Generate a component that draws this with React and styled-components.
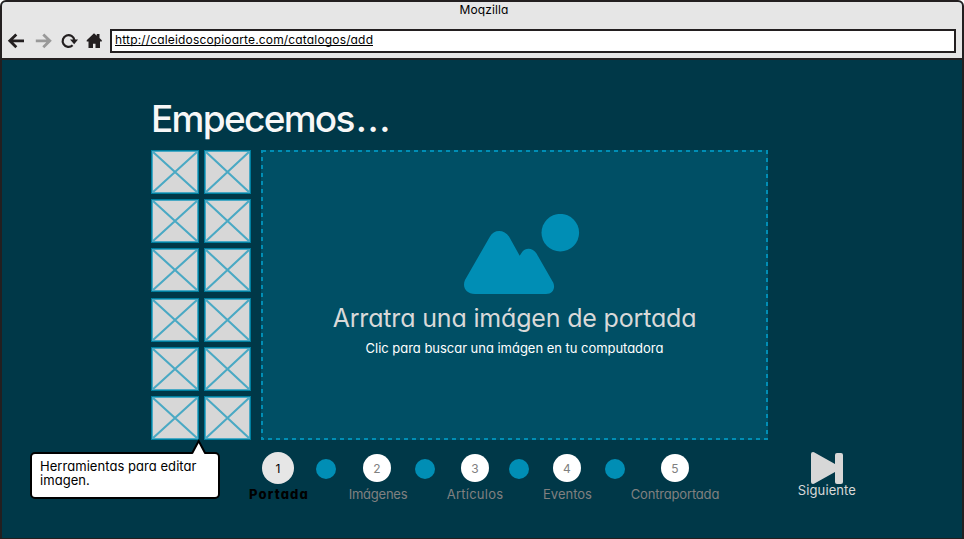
import React from "react";
import styled, { createGlobalStyle } from "styled-components";

const color = {
  ink: "#231f20",
  chrome: "#e6e6e6",
  page: "#003848",
  panel: "#004f65",
  accent: "#008eb5",
  tile: "#d7d7d7",
  tileLine: "#4aa9c4",
  muted: "#808080",
};

const GlobalStyle = createGlobalStyle`
  * { box-sizing: border-box; }
  body {
    margin: 0;
    background: #fff;
    font-family: Inter, "Open Sans", sans-serif;
    font-feature-settings: "cv11";
    overflow: hidden;
  }
  svg { display: block; flex: none; }
`;

const BrowserWindow = styled.div`
  width: 964px;
  height: 539px;
  border: 2px solid ${color.ink};
  border-bottom-width: 1px;
  border-radius: 6px 6px 0 0;
  background: ${color.page};
  overflow: hidden;
`;

const Chrome = styled.header`
  height: 58px;
  background: ${color.chrome};
  border-bottom: 2px solid ${color.ink};
`;

const TitleBar = styled.div`
  height: 27px;
  padding-left: 4px;
  text-align: center;
  font-size: 12px;
  line-height: 16px;
  letter-spacing: 0.1px;
`;

const Toolbar = styled.div`
  display: flex;
  align-items: center;
  height: 24px;
  padding: 0 6px 0 5px;
`;

const NavIcon = styled.svg`
  width: 18px;
  height: 18px;
  margin-right: ${(p) => p.$gap}px;
`;

const AddressBar = styled.div`
  flex: 1;
  height: 24px;
  padding-left: 3px;
  border: 2px solid ${color.ink};
  background: #fff;
  font-size: 12px;
  line-height: 18px;
  letter-spacing: 0.16px;
`;

const Url = styled.span`
  display: inline-block;
  height: 15px;
  border-bottom: 1px solid #000;
`;

const Page = styled.main`
  padding-top: 39px;
`;

const Title = styled.h1`
  margin: 0 0 11px 149px;
  color: #f7f7f7;
  font-size: 37px;
  font-weight: 450;
  line-height: 40px;
  letter-spacing: -1.7px;
`;

const Ellipsis = styled.span`
  margin-left: 2px;
  letter-spacing: 0.6px;
`;

const Workspace = styled.div`
  display: flex;
  gap: 10px;
  height: 290px;
  margin-left: 149px;
`;

const Tools = styled.div`
  display: grid;
  grid-template-columns: 48px 47px;
  grid-auto-rows: 44px;
  column-gap: 5px;
  align-content: space-between;
`;

const ToolTile = styled.svg`
  width: 100%;
  height: 100%;
`;

const DropZone = styled.section`
  position: relative;
  display: flex;
  flex-direction: column;
  align-items: center;
  width: 507px;
  padding-top: 64px;
  background: ${color.panel};
`;

const DashedOutline = styled.svg`
  position: absolute;
  inset: 0;
  width: 100%;
  height: 100%;
`;

const Picture = styled.svg`
  width: 116px;
  height: 80px;
  margin: 0 0 9px 15px;
`;

const DropTitle = styled.div`
  margin-bottom: 6px;
  color: #d9d9d9;
  font-size: 25px;
  font-weight: 400;
  line-height: 30px;
  letter-spacing: -0.17px;
`;

const DropHint = styled.div`
  color: #fff;
  font-size: 13px;
  line-height: 18px;
  letter-spacing: -0.03px;
`;

const Footer = styled.footer`
  display: flex;
  align-items: flex-start;
  margin-top: 12px;
  padding: 0 106px 0 28px;
`;

const Callout = styled.div`
  position: relative;
  width: 190px;
  height: 47px;
  margin-right: 28px;
  padding: 5px 8px;
  border: 2px solid #000;
  border-radius: 5px;
  background: #fff;
  font-size: 13px;
  line-height: 14px;
  letter-spacing: 0.05px;
`;

const CalloutTail = styled.svg`
  position: absolute;
  left: 159px;
  top: -15px;
  width: 16px;
  height: 16px;
`;

const Steps = styled.div`
  display: grid;
  grid-template-columns: 60px 36px 66px 30px 70px 18px 78px 18px 102px;
  justify-items: center;
`;

const Step = styled.div`
  display: flex;
  flex-direction: column;
  align-items: center;
`;

const StepNumber = styled.div`
  display: grid;
  place-items: center;
  width: ${(p) => (p.$active ? 32 : 28)}px;
  height: ${(p) => (p.$active ? 32 : 28)}px;
  margin: ${(p) => (p.$active ? 0 : 2)}px 0;
  padding-top: 1px;
  border-radius: 50%;
  background: ${(p) => (p.$active ? "#e6e6e6" : "#fff")};
  color: ${(p) => (p.$active ? "#000" : color.muted)};
  font-size: 12px;
  line-height: 16px;
`;

const StepLabel = styled.div`
  margin-top: 2px;
  padding-left: ${(p) => p.$shift || 0}px;
  color: ${(p) => (p.$active ? "#000" : color.muted)};
  font-size: 13px;
  font-weight: ${(p) => (p.$active ? 800 : 400)};
  line-height: 16px;
  letter-spacing: ${(p) => p.$tracking}px;
  white-space: nowrap;
`;

const Dot = styled.div`
  width: 20px;
  height: 20px;
  margin: 7px -1px 0;
  border-radius: 50%;
  background: ${color.accent};
`;

const Next = styled.div`
  display: flex;
  flex-direction: column;
  align-items: center;
  margin-left: auto;
  color: #d9d9d9;
  font-size: 13px;
  line-height: 12px;
  letter-spacing: 0.1px;
`;

const NextIcon = styled.svg`
  width: 32px;
  height: 32px;
`;

const steps = [
  { label: "Portada", tracking: 1.15, shift: 2, active: true },
  { label: "Imágenes", tracking: -0.25, shift: 2 },
  { label: "Artículos", tracking: 0.25 },
  { label: "Eventos", tracking: 0, shift: 1 },
  { label: "Contraportada", tracking: -0.18 },
];

const Tile = ({ width }) => (
  <ToolTile viewBox={`0 0 ${width} 44`}>
    <rect width={width} height="44" fill="#007f9f" />
    <rect x="1" y="1" width={width - 2} height="42" fill={color.tileLine} />
    <rect x="2" y="2" width={width - 4} height="40" fill={color.tile} />
    <path
      d={`M1.5 1.5L${width - 1.5} 42.5M${width - 1.5} 1.5L1.5 42.5`}
      stroke={color.tileLine}
      strokeWidth="2.1"
    />
  </ToolTile>
);

export default function App() {
  return (
    <>
      <GlobalStyle />
      <BrowserWindow>
        <Chrome>
          <TitleBar>Moqzilla</TitleBar>
          <Toolbar>
            <NavIcon $gap={9} viewBox="0 0 18 18" fill="none" stroke={color.ink} strokeWidth="2.8">
              <path d="M9.3 2.4L2.8 8.8l6.5 6.4M3 8.8h14" />
            </NavIcon>
            <NavIcon $gap={8} viewBox="0 0 18 18" fill="none" stroke="#999" strokeWidth="2.8">
              <path d="M9.3 2.4L15.8 8.8l-6.5 6.4M15.6 8.8H1.8" />
            </NavIcon>
            <NavIcon $gap={7} viewBox="0 0 18 18">
              <path d="M12.6 13.3A5.9 5.9 0 1 1 14.4 8" fill="none" stroke={color.ink} strokeWidth="2.2" />
              <path d="M10 7.6h8L14.2 12.2z" fill={color.ink} />
            </NavIcon>
            <NavIcon $gap={7} viewBox="0 0 18 18" fill={color.ink}>
              <path d="M9 1.2l2.8 2.5V2h2.7v4L16.8 8.3v1.2H15v6.5H10.5v-4.2H8v4.2H3.5V9.5H1.7V8.3z" />
            </NavIcon>
            <AddressBar>
              <Url>http://caleidoscopioarte.com/catalogos/add</Url>
            </AddressBar>
          </Toolbar>
        </Chrome>
        <Page>
          <Title>
            Empecemos<Ellipsis>...</Ellipsis>
          </Title>
          <Workspace>
            <Tools>
              {Array.from({ length: 12 }, (_, i) => (
                <Tile key={i} width={i % 2 ? 47 : 48} />
              ))}
            </Tools>
            <DropZone>
              <DashedOutline viewBox="0 0 507 290">
                <rect
                  x="1"
                  y="1"
                  width="505"
                  height="288"
                  fill="none"
                  stroke={color.accent}
                  strokeWidth="2"
                  strokeDasharray="4 4"
                />
              </DashedOutline>
              <Picture viewBox="0 0 116 80" fill={color.accent}>
                <circle cx="96.3" cy="18.7" r="18.8" />
                <path d="M11 80C2 80-2 73 1 66L26 22.5C29.5 15 40.5 15 45 22.5L55.7 41.7L58.3 37.7C61.5 33.5 69 33.5 72.5 39.5L89.3 68.7C91.5 74 89 80 82 80z" />
              </Picture>
              <DropTitle>Arratra una imágen de portada</DropTitle>
              <DropHint>Clic para buscar una imágen en tu computadora</DropHint>
            </DropZone>
          </Workspace>
          <Footer>
            <Callout>
              <CalloutTail viewBox="0 0 16 16">
                <path d="M1.5 14.5L7.7 2L14 14.5V16H1.5z" fill="#fff" />
                <path d="M1 14.5L7.7 2L14.3 14.5" fill="none" stroke="#000" strokeWidth="2" />
              </CalloutTail>
              Herramientas para editar imagen.
            </Callout>
            <Steps>
              {steps.map((step, i) => (
                <React.Fragment key={step.label}>
                  {i > 0 && <Dot />}
                  <Step>
                    <StepNumber $active={step.active}>{i + 1}</StepNumber>
                    <StepLabel $active={step.active} $tracking={step.tracking} $shift={step.shift}>
                      {step.label}
                    </StepLabel>
                  </Step>
                </React.Fragment>
              ))}
            </Steps>
            <Next>
              <NextIcon viewBox="0 0 32 32" fill={color.tile}>
                <path d="M0 2Q0 0 2 0L3 .3L24 12V3Q24 1 26 1H30Q32 1 32 3V30Q32 32 30 32H26Q24 32 24 30V20L3 31.7L2 32Q0 32 0 30z" />
              </NextIcon>
              Siguiente
            </Next>
          </Footer>
        </Page>
      </BrowserWindow>
    </>
  );
}
